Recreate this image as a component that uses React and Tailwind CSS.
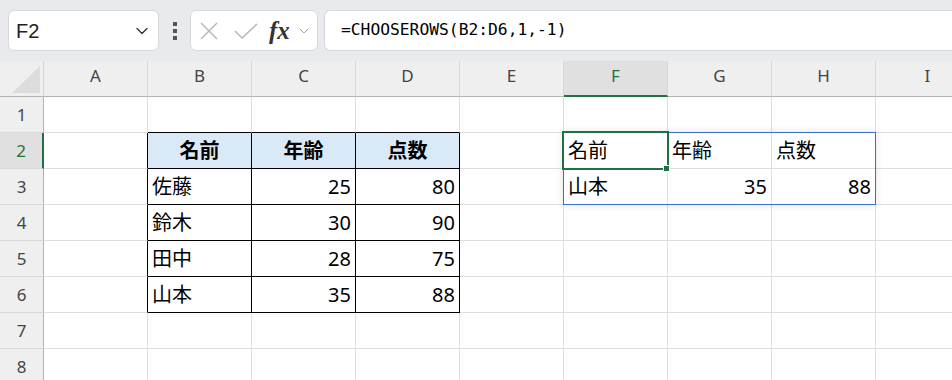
import { ChevronDown } from "lucide-react";

const COLS = ["A", "B", "C", "D", "E", "F", "G", "H", "I"];
const ROWS = [1, 2, 3, 4, 5, 6, 7, 8];

// cell content: [text, kind]  kind: h = bold header, n = number, t = text
const DATA = {
  "B2": ["名前", "h"], "C2": ["年齢", "h"], "D2": ["点数", "h"],
  "B3": ["佐藤", "t"], "C3": ["25", "n"], "D3": ["80", "n"],
  "B4": ["鈴木", "t"], "C4": ["30", "n"], "D4": ["90", "n"],
  "B5": ["田中", "t"], "C5": ["28", "n"], "D5": ["75", "n"],
  "B6": ["山本", "t"], "C6": ["35", "n"], "D6": ["88", "n"],
  "F2": ["名前", "t"], "G2": ["年齢", "t"], "H2": ["点数", "t"],
  "F3": ["山本", "t"], "G3": ["35", "n"], "H3": ["88", "n"],
};

function Cell({ col, row }) {
  const inTable = row >= 2 && row <= 6;
  const blackRight = inTable && ["A", "B", "C", "D"].includes(col);
  const blackBottom = row <= 6 && ["B", "C", "D"].includes(col);
  const item = DATA[col + row];
  const kind = item ? item[1] : null;

  return (
    <div
      className={
        "w-[104px] h-full shrink-0 border-r border-b flex items-center px-[4px] " +
        (blackRight ? "border-r-black " : "border-r-[#dedede] ") +
        (blackBottom ? "border-b-black " : "border-b-[#dedede] ") +
        (kind === "h" ? "bg-[#dae9f8] justify-center font-bold " : "") +
        (kind === "n" ? "justify-end " : "")
      }
    >
      {item && <span className="text-[20px] leading-none text-black">{item[0]}</span>}
    </div>
  );
}

export default function App() {
  return (
    <div
      className="w-[952px] h-[380px] overflow-hidden bg-white"
      style={{ fontFamily: '"Noto Sans", "Noto Sans CJK JP", sans-serif' }}
    >
      {/* TOOLBAR */}
      <div className="h-[61px] bg-[#e8eaed] flex items-center pl-[8px]">
        <div className="w-[151px] h-[41px] bg-white rounded-[6px] border border-[#d6d8db] flex items-center pl-[7px] pr-[6px]">
          <span
            className="text-[20px] text-[#222] flex-1"
            style={{ fontFamily: '"Liberation Sans", sans-serif' }}
          >
            F2
          </span>
          <ChevronDown size={20} strokeWidth={1.6} className="text-[#333]" />
        </div>

        <div className="w-[31px] flex flex-col items-center gap-[3px]">
          <div className="w-[4px] h-[4px] bg-[#555]" />
          <div className="w-[4px] h-[4px] bg-[#555]" />
          <div className="w-[4px] h-[4px] bg-[#555]" />
        </div>

        <div className="w-[128px] h-[41px] bg-white rounded-[6px] border border-[#d6d8db] flex items-center pl-[8px]">
          <svg width="20" height="20" viewBox="0 0 20 20" className="mr-[14px]">
            <path d="M2 2 L18 18 M18 2 L2 18" stroke="#b5b5b5" strokeWidth="1.4" fill="none" />
          </svg>
          <svg width="26" height="20" viewBox="0 0 26 20" className="mr-[10px]">
            <path d="M2 10 L9 17 L24 3" stroke="#b5b5b5" strokeWidth="1.4" fill="none" />
          </svg>
          <span
            className="text-[25px] italic font-semibold text-[#333] leading-none mr-[6px]"
            style={{ fontFamily: '"Liberation Serif", serif' }}
          >
            fx
          </span>
          <ChevronDown size={16} strokeWidth={1.4} className="text-[#999]" />
        </div>

        <div className="ml-[6px] flex-1 h-[41px] bg-white rounded-l-[6px] border border-r-0 border-[#d6d8db] flex items-center pl-[16px]">
          <span
            className="text-[16.3px] text-black"
            style={{ fontFamily: '"DejaVu Sans Mono", monospace' }}
          >
            =CHOOSEROWS(B2:D6,1,-1)
          </span>
        </div>
      </div>

      {/* GRID */}
      <div className="relative">
        {/* column headers */}
        <div className="flex h-[36px]">
          <div className="w-[44px] shrink-0 h-full bg-[#efefef] border-r border-b border-r-[#d4d4d4] border-b-[#b3b3b3] relative">
            <div
              className="absolute left-[12px] top-[5px] w-[28px] h-[27px] bg-[#dcdcdc]"
              style={{ clipPath: "polygon(100% 0, 100% 100%, 0 100%)" }}
            />
          </div>
          {COLS.map((c) => (
            <div
              key={c}
              className={
                "w-[104px] shrink-0 h-full flex justify-center pt-[5px] text-[17px] leading-[20px] border-r border-r-[#d8d8d8] " +
                (c === "F"
                  ? "bg-[#e0e0e0] text-[#1e7145] border-b-2 border-b-[#1e7145]"
                  : "bg-[#efefef] text-[#444] border-b border-b-[#b3b3b3]")
              }
            >
              {c}
            </div>
          ))}
        </div>

        {/* rows */}
        {ROWS.map((r) => (
          <div key={r} className="flex h-[36px]">
            <div
              className={
                "w-[44px] shrink-0 h-full flex items-center justify-center text-[17px] border-b border-b-[#d8d8d8] " +
                (r === 2
                  ? "bg-[#e0e0e0] text-[#1e7145] border-r-2 border-r-[#1e7145]"
                  : "bg-[#efefef] text-[#444] border-r border-r-[#b3b3b3]")
              }
            >
              {r}
            </div>
            {COLS.map((c) => (
              <Cell key={c} col={c} row={r} />
            ))}
          </div>
        ))}

        {/* spill range */}
        <div className="absolute left-[563px] top-[71px] w-[313px] h-[73px] border border-[#3b6fc8] shadow-[0_0_8px_rgba(0,0,0,0.12)] pointer-events-none" />
        {/* active cell */}
        <div className="absolute left-[562px] top-[70px] w-[107px] h-[39px] border-2 border-[#1e7145] pointer-events-none" />
        <div className="absolute left-[663px] top-[104px] w-[7px] h-[7px] bg-[#1e7145] border border-white" />
      </div>
    </div>
  );
}
